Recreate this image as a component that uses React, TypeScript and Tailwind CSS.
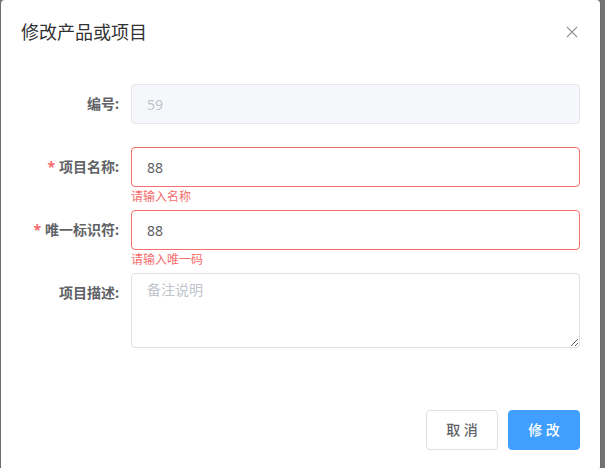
import React from 'react';

const FONT = '"Noto Sans", "Noto Sans CJK SC", sans-serif';

const FormItem = ({
  label,
  required = false,
  error,
  children,
  last = false,
}: {
  label: string;
  required?: boolean;
  error?: string;
  children: React.ReactNode;
  last?: boolean;
}) => (
  <div className={`flex ${last ? 'mb-[22px]' : 'mb-[23px]'}`}>
    <label className="w-[110px] shrink-0 pr-3 text-right text-sm font-bold leading-10 text-[#606266]">
      {required && <span className="mr-1 text-[#f56c6c]">*</span>}
      {label}
    </label>
    <div className="relative flex-1">
      {children}
      {error && (
        <div className="absolute left-0 top-full pt-1 text-xs leading-none text-[#f56c6c]">{error}</div>
      )}
    </div>
  </div>
);

export default function App() {
  return (
    <div className="h-[468px] w-[605px] overflow-hidden bg-[#737373]" style={{ fontFamily: FONT }}>
      <div className="ml-px h-[470px] w-[599px] rounded-sm bg-white shadow">
        {/* header */}
        <div className="flex items-start justify-between px-5 pb-2.5 pt-5">
          <span className="text-lg leading-6 text-[#303133]">修改产品或项目</span>
          <button type="button" className="mt-1 p-0.5 text-[#909399]">
            <svg width="12" height="12" viewBox="0 0 12 12" fill="none" stroke="currentColor" strokeWidth="1.1">
              <path d="M1 1 L11 11 M11 1 L1 11" />
            </svg>
          </button>
        </div>

        {/* body */}
        <div className="px-5 pt-[30px] pb-[30px]">
          <FormItem label="编号:">
            <input
              disabled
              value="59"
              readOnly
              className="h-10 w-full rounded border border-[#e4e7ed] bg-[#f5f7fa] px-[15px] text-sm text-[#c0c4cc] outline-none"
            />
          </FormItem>
          <FormItem label="项目名称:" required error="请输入名称">
            <input
              value="88"
              readOnly
              className="h-10 w-full rounded border border-[#f56c6c] bg-white px-[15px] text-sm text-[#606266] outline-none"
            />
          </FormItem>
          <FormItem label="唯一标识符:" required error="请输入唯一码">
            <input
              value="88"
              readOnly
              className="h-10 w-full rounded border border-[#f56c6c] bg-white px-[15px] text-sm text-[#606266] outline-none"
            />
          </FormItem>
          <FormItem label="项目描述:" last>
            <textarea
              placeholder="备注说明"
              className="block h-[75px] w-full resize-y rounded border border-[#dcdfe6] bg-white px-[15px] py-[5px] text-sm leading-[1.5] text-[#606266] outline-none placeholder:text-[#c0c4cc]"
            />
          </FormItem>
        </div>

        {/* footer */}
        <div className="flex justify-end gap-2.5 px-5 pt-2.5 pb-5">
          <button
            type="button"
            className="h-10 w-[72px] rounded border border-[#dcdfe6] bg-white text-sm font-medium whitespace-pre text-[#606266]"
          >
            取 消
          </button>
          <button
            type="button"
            className="h-10 w-[72px] rounded border border-[#409eff] bg-[#409eff] text-sm font-medium whitespace-pre text-white"
          >
            修 改
          </button>
        </div>
      </div>
    </div>
  );
}
